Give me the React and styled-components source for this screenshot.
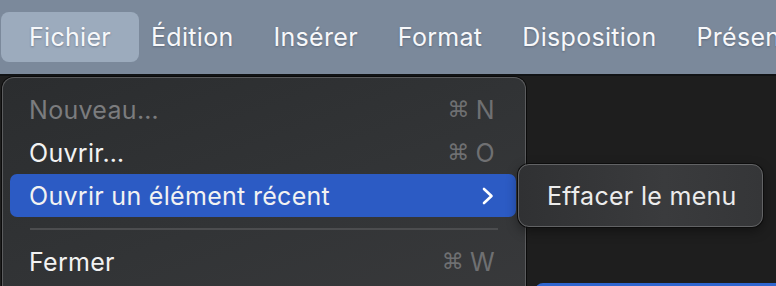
import React from 'react'
import styled, { createGlobalStyle } from 'styled-components'

const GlobalStyle = createGlobalStyle`
html, body {
    margin: 0;
    padding: 0;
    background: #1e1e1e;
    overflow: hidden;
}
body {
    font-family: Inter, "Noto Sans", "DejaVu Sans", sans-serif;
    -webkit-font-smoothing: antialiased;
}
`

const Screen = styled.div`
width: 776px;
height: 286px;
display: flex;
flex-direction: column;
overflow: hidden;
`

const MenuBar = styled.nav`
height: 74px;
flex: none;
display: flex;
align-items: center;
padding-left: 1px;
background: #7b899b;
border-bottom: 2px solid #111315;
white-space: nowrap;
overflow: hidden;
`

const BarItem = styled.div`
height: 50px;
flex: none;
display: flex;
align-items: center;
padding: 0 ${p => (p.$active ? 28 : 20)}px;
margin-right: ${p => (p.$active ? -8 : 0)}px;
border-radius: 8px;
background: ${p => (p.$active ? '#9cabbd' : 'transparent')};
color: #f7f8fa;
font-size: 25px;
letter-spacing: 0.3px;
text-shadow: 0 1px 2px rgba(40, 50, 65, 0.35);
`

const Desktop = styled.div`
position: relative;
flex: 1;
background: #1e1e1e;
`

const Menu = styled.div`
width: 524px;
margin: 1px 0 0 2px;
padding: 10px 9px 0 7px;
border: 1px solid #5b5c5e;
border-bottom: none;
border-radius: 12px 12px 0 0;
box-shadow: 0 0 0 1px #0b0b0b;
background: linear-gradient(160deg, #2b2d2f 0%, #323436 55%, #38393b 100%);
box-sizing: border-box;
height: 220px;
`

const Row = styled.div`
height: 43px;
display: flex;
align-items: center;
justify-content: space-between;
padding: 0 21px 0 19px;
border-radius: 7px;
font-size: 25px;
letter-spacing: 0.3px;
color: ${p => (p.$disabled ? '#7b7c7e' : '#f2f2f2')};
background: ${p => (p.$selected ? '#2c5bc4' : 'transparent')};
`

const Shortcut = styled.span`
display: flex;
align-items: center;
gap: 6px;
color: #6f7072;
font-size: 25px;
`

const Cmd = styled.span`
font-family: "DejaVu Sans", sans-serif;
font-size: 22px;
`

const Separator = styled.div`
height: 23px;
display: flex;
align-items: center;
padding: 0 18px 0 20px;

&::before {
    content: '';
    flex: 1;
    height: 2px;
    background: #4c4d4f;
}
`

const Submenu = styled.div`
position: absolute;
left: 518px;
top: 88px;
width: 245px;
height: 63px;
box-sizing: border-box;
display: flex;
align-items: center;
padding-left: 28px;
border: 1px solid #626365;
border-radius: 11px;
box-shadow: 0 0 0 1px #0d0d0d, 0 4px 12px rgba(0, 0, 0, 0.4);
background: linear-gradient(90deg, #303133 0%, #3a3b3d 60%, #353638 100%);
color: #ececec;
font-size: 25px;
letter-spacing: 0.3px;
`

const BackWindow = styled.div`
position: absolute;
left: 535px;
top: 207px;
right: 0;
height: 10px;
border-radius: 8px 0 0 0;
background: #2f66d0;
`

function Chevron() {
    return (
        <svg width="14" height="20" viewBox="0 0 14 20">
            <path d="M3 3 L10.5 10 L3 17" fill="none" stroke="#ffffff" strokeWidth="2.6" strokeLinecap="round" strokeLinejoin="round" />
        </svg>
    )
}

const barItems = ['Fichier', 'Édition', 'Insérer', 'Format', 'Disposition', 'Présen']

export default function App() {
    return (
        <Screen>
            <GlobalStyle />
            <MenuBar>
                {barItems.map((label, i) => (
                    <BarItem key={label} $active={i === 0}>{label}</BarItem>
                ))}
            </MenuBar>
            <Desktop>
                <Menu>
                    <Row $disabled>
                        <span>Nouveau…</span>
                        <Shortcut><Cmd>⌘</Cmd>N</Shortcut>
                    </Row>
                    <Row>
                        <span>Ouvrir…</span>
                        <Shortcut><Cmd>⌘</Cmd>O</Shortcut>
                    </Row>
                    <Row $selected>
                        <span>Ouvrir un élément récent</span>
                        <Chevron />
                    </Row>
                    <Separator />
                    <Row>
                        <span>Fermer</span>
                        <Shortcut><Cmd>⌘</Cmd>W</Shortcut>
                    </Row>
                </Menu>
                <Submenu>Effacer le menu</Submenu>
                <BackWindow />
            </Desktop>
        </Screen>
    )
}
